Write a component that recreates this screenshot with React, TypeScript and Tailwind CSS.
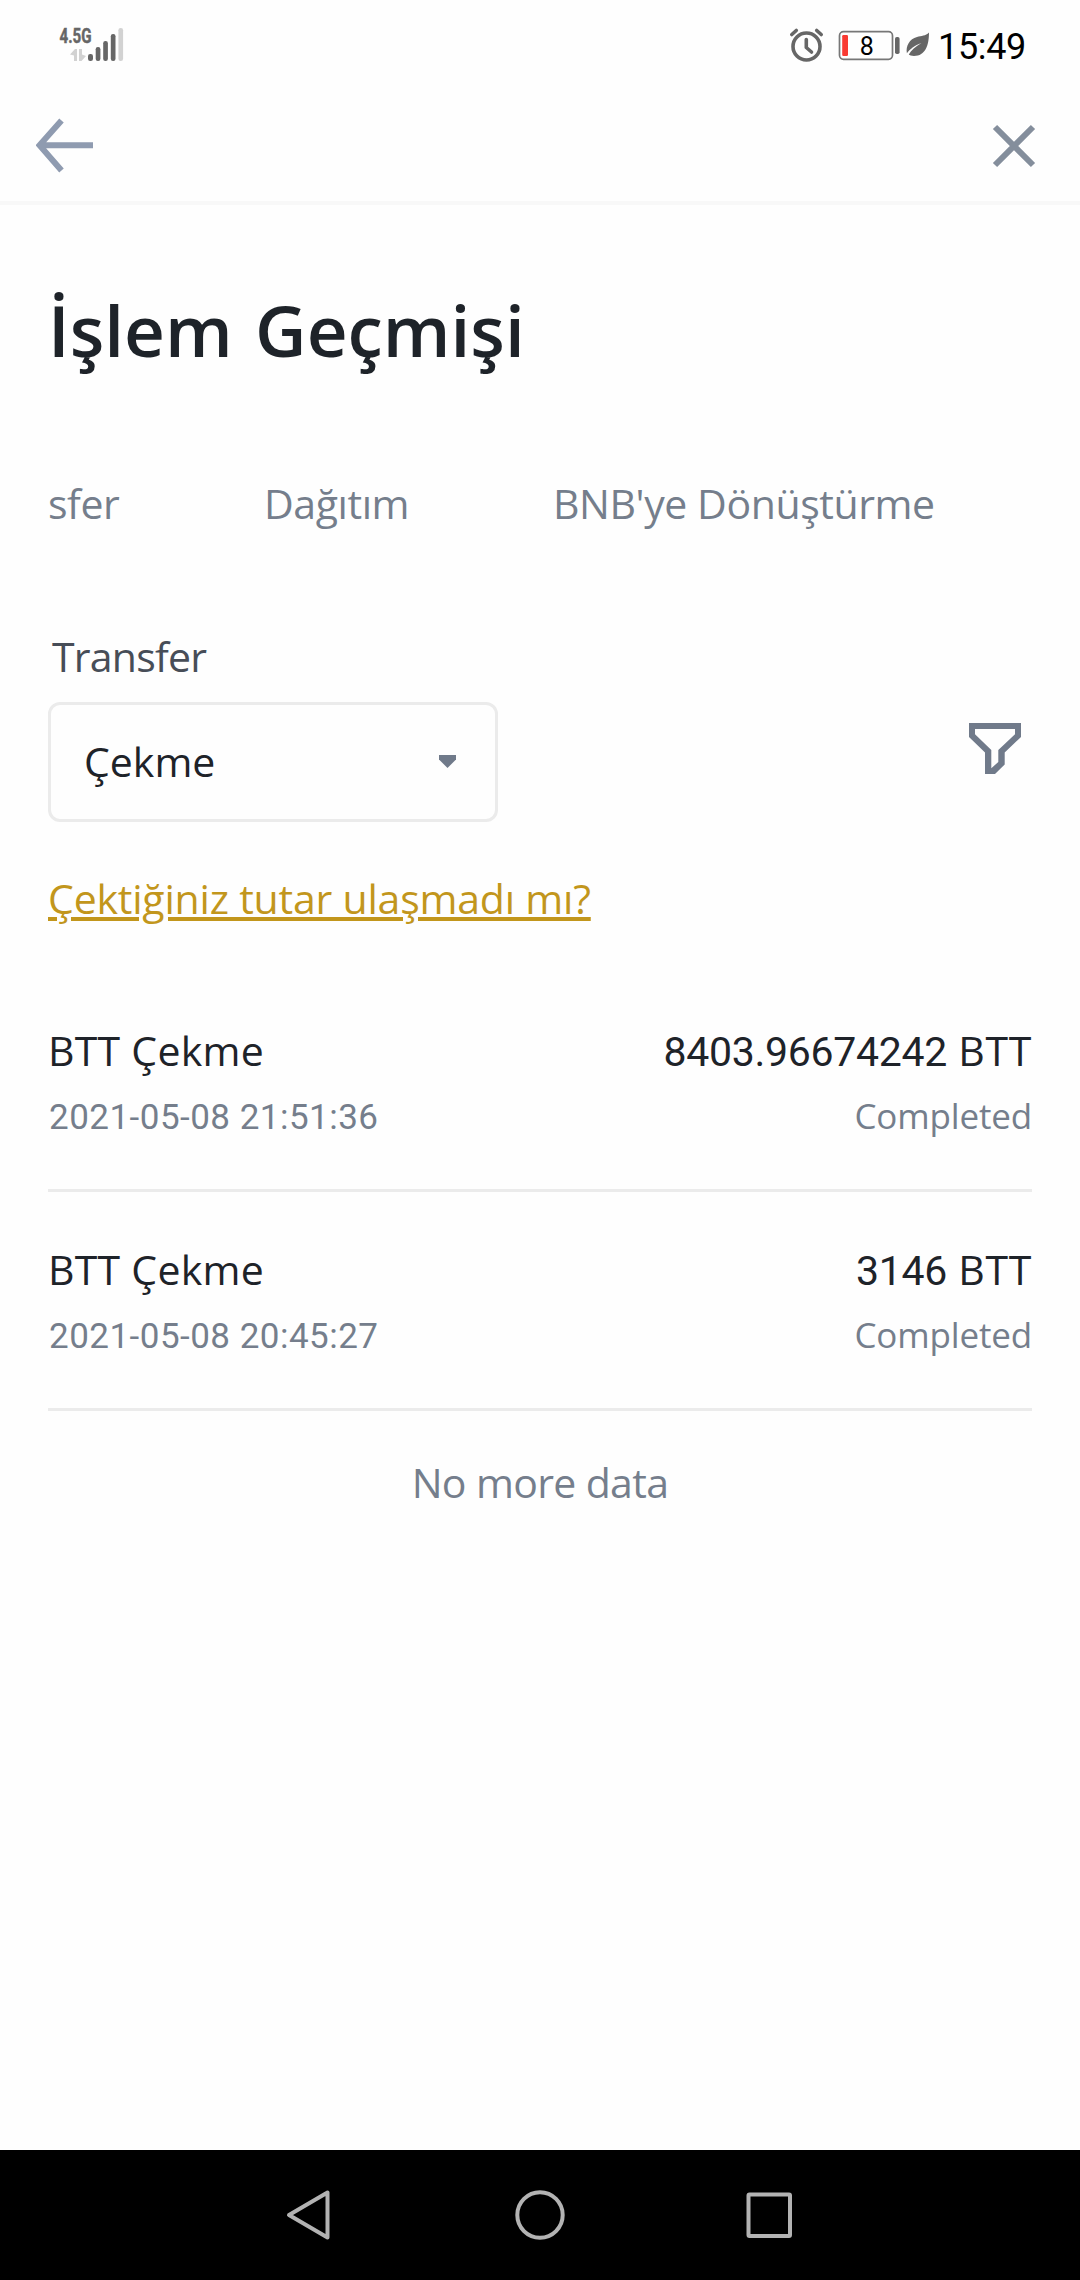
import React from 'react';

const transactions = [
  { title: 'BTT Çekme', date: '2021-05-08 21:51:36', amount: '8403.96674242', status: 'Completed' },
  { title: 'BTT Çekme', date: '2021-05-08 20:45:27', amount: '3146', status: 'Completed' },
];

function StatusBar() {
  return (
    <div className="h-[92px] flex justify-between pl-[58px] pr-[54px]">
      {/* Signal */}
      <svg className="mt-6 w-[68px] h-10" viewBox="58 24 68 40" fill="#666666">
        <text
          x="59.5"
          y="43"
          fontSize="21"
          fontWeight="700"
          fontFamily="Roboto, sans-serif"
          textLength="32"
          lengthAdjust="spacingAndGlyphs"
          stroke="#666666"
          strokeWidth="0.5"
        >
          4.5G
        </text>
        <path d="M70 54.5 L75 49 H77 V61 H74 V55.5 Z M79 49 H82 V54.5 L86 56 L81.5 61 H79 Z" fill="#d2d2d2" />
        <rect x="88" y="54" width="5" height="7" rx="2.2" />
        <rect x="95.7" y="47" width="4.7" height="14" rx="2.2" />
        <rect x="103.2" y="41" width="4.7" height="20" rx="2.2" />
        <rect x="110.8" y="34" width="4.7" height="27" rx="2.2" />
        <rect x="118.4" y="28" width="4.7" height="33" rx="2.2" fill="#d2d2d2" />
      </svg>

      <div className="flex">
        {/* Alarm, battery, power saving */}
        <svg className="mt-6 w-[150px] h-10" viewBox="788 24 150 40" fill="none">
          <g stroke="#666666" strokeLinecap="round">
            <circle cx="806.5" cy="46.5" r="13.5" strokeWidth="3.6" />
            <path d="M806.3 39.5 V47.5 L811.5 52" strokeWidth="3.6" strokeLinejoin="round" />
            <path d="M791.8 34.5 L796.3 30.5 M816.7 30.5 L821.2 34.5" strokeWidth="3.6" />
          </g>
          <rect x="839.5" y="31.7" width="53" height="27.6" rx="4" stroke="#777777" strokeWidth="1.7" />
          <rect x="842.2" y="35" width="5.8" height="21" rx="1.2" fill="#f93a32" />
          <text x="866.8" y="54.5" fontSize="25" textAnchor="middle" fontFamily="Roboto, sans-serif" fill="#000000">
            8
          </text>
          <rect x="895" y="37" width="4.6" height="17" rx="1.8" fill="#666666" />
          <path
            d="M929 32.5 C929 45 925.5 56 914 56 C911.5 56 909.5 55.3 908.8 54.6 C911 50.5 915.5 46.5 921.5 43 C914.5 45.5 909.8 49.3 906.9 53.2 C905.5 46 909.5 39 917 37 C921.5 35.8 925.5 36 929 32.5 Z"
            fill="#666666"
          />
        </svg>
        <span className="mt-[23px] h-12 leading-[48px] text-[36px] tracking-[-0.35px] font-[Roboto,sans-serif] text-black">
          15:49
        </span>
      </div>
    </div>
  );
}

function NavigationBar() {
  return (
    <div className="h-[130px] bg-black flex items-center justify-center">
      <svg className="w-[600px] h-[130px]" viewBox="240 2150 600 130" fill="none" stroke="#b3b3b3" strokeWidth="4" strokeLinejoin="round">
        <path d="M289 2215 L327.5 2192.5 V2237.5 Z" />
        <circle cx="540" cy="2215" r="22.7" />
        <rect x="748.5" y="2194.5" width="41.5" height="41.5" rx="1" />
      </svg>
    </div>
  );
}

export default function App() {
  return (
    <div className="w-[1080px] h-[2280px] flex flex-col overflow-hidden bg-[#fefefe] font-['Open_Sans',sans-serif] text-[#1e2329]">
      <StatusBar />

      {/* Page header */}
      <div className="h-[113px] flex justify-between pl-9 pr-11 border-b-4 border-[#f8f8f8]">
        <svg className="mt-[25px] w-[58px] h-14" viewBox="36 117 58 56" fill="none" stroke="#8f9bb0" strokeWidth="6">
          <path d="M93 145.3 H40 M61.5 120.5 L39.5 145.3 L61.5 170.5" />
        </svg>
        <svg className="mt-8 w-11 h-11" viewBox="992 124 44 44" fill="none" stroke="#848e9c" strokeWidth="6">
          <path d="M995 127 L1033 165 M1033 127 L995 165" />
        </svg>
      </div>

      <main className="flex-1 px-12">
        <h1 className="mt-[77px] h-24 leading-[96px] text-[71px] [word-spacing:4px] font-semibold whitespace-nowrap">
          İşlem Geçmişi
        </h1>

        {/* Tabs */}
        <div className="mt-[97px] h-14 flex leading-[56px] text-[41px] tracking-[-0.42px] text-[#757e8c] whitespace-nowrap">
          <span className="w-[216px]">sfer</span>
          <span className="w-[289px]">Dağıtım</span>
          <span>BNB'ye Dönüştürme</span>
        </div>

        {/* Transfer type */}
        <div className="mt-[97px] flex justify-between">
          <div>
            <div className="pl-1 h-14 leading-[56px] text-[41px] tracking-[-0.75px] text-[#474d57]">Transfer</div>
            <div className="mt-[18px] w-[450px] h-[120px] pl-[33px] pr-[39px] flex items-center justify-between rounded-xl border-3 border-[#ebebeb]">
              <span className="pb-0.5 leading-[56px] text-[41px]">Çekme</span>
              <svg className="mb-0.5 w-[17px] h-[13px]" viewBox="0 0 17 13" fill="#707a8a">
                <path d="M0 0 H17 V4.5 L8.5 13 L0 4.5 Z" />
              </svg>
            </div>
          </div>
          <svg className="mt-[95px] mr-[11px] w-[52px] h-[51px]" viewBox="969 723 52 51" fill="#707a8a" fillRule="evenodd">
            <path d="M969 723 H1021 V737 L1004.7 752.5 V764.5 L995 774 H985 V752.5 L969 737 Z M975 729 V734.3 L991.3 750 V768.3 L998.3 762 V750 L1015 734.3 V729 Z" />
          </svg>
        </div>

        <a className="mt-12 block w-fit h-14 leading-[56px] text-[41px] tracking-[-0.2px] text-[#c2961c] underline decoration-4 underline-offset-[3px] whitespace-nowrap">
          Çektiğiniz tutar ulaşmadı mı?
        </a>

        {/* Transactions */}
        <div className="mt-[47px]">
          {transactions.map((item) => (
            <div key={item.date} className="h-[219px] pt-[49px] border-b-3 border-[#ebebeb]">
              <div className="flex justify-between h-14 leading-[56px] text-[41px]">
                <span className="tracking-[0.25px]">{item.title}</span>
                <span className="tracking-[0.7px]">
                  <span className="font-[Roboto,sans-serif] tracking-[-0.3px]">{item.amount}</span> BTT
                </span>
              </div>
              <div className="mt-3.5 flex justify-between h-12 leading-[48px] text-[35px] text-[#757e8c]">
                <span className="pl-px">
                  <span className="font-[Roboto,sans-serif] tracking-[0.48px]">{item.date}</span>
                </span>
                <span className="tracking-[-0.15px]">{item.status}</span>
              </div>
            </div>
          ))}
        </div>

        <p className="mt-[43px] h-14 leading-[56px] text-[41px] tracking-[-0.65px] text-center text-[#757e8c]">No more data</p>
      </main>

      <NavigationBar />
    </div>
  );
}
